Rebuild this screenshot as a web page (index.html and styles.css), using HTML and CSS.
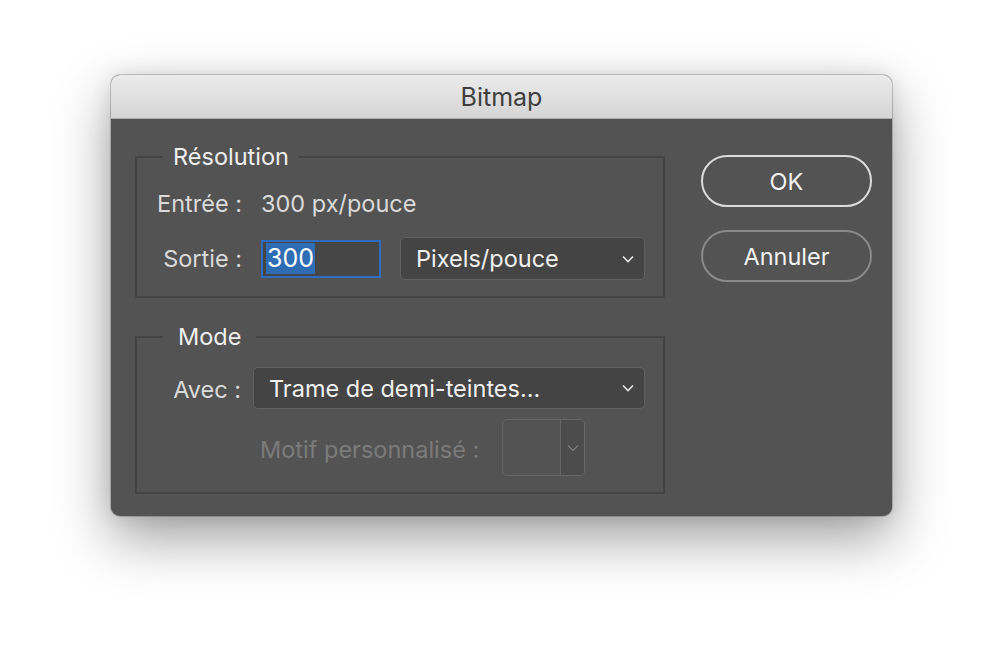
FILE: index.html
```html
<!DOCTYPE html>
<html lang="fr">
<head>
<meta charset="utf-8">
<title>Bitmap</title>
<link rel="stylesheet" href="styles.css">
</head>
<body>
<div class="desktop">
  <div class="window">
    <div class="titlebar">Bitmap</div>
    <div class="content">
      <div class="left">
        <div class="group group-res">
          <span class="group-title">Résolution</span>
          <div class="row row-in">
            <span class="label lab-res">Entrée :</span>
            <span class="value">300 px/pouce</span>
          </div>
          <div class="row row-out">
            <span class="label lab-res">Sortie :</span>
            <div class="input"><span class="sel">300</span></div>
            <div class="select select-unit">
              <span>Pixels/pouce</span>
              <svg class="chev" width="12" height="8" viewBox="0 0 12 8"><path d="M1 1.5 L6 6.5 L11 1.5" fill="none" stroke="#e6e6e6" stroke-width="1.6"/></svg>
            </div>
          </div>
        </div>
        <div class="group group-mode">
          <span class="group-title title-mode">Mode</span>
          <div class="row row-avec">
            <span class="label lab-avec">Avec :</span>
            <div class="select select-mode">
              <span>Trame de demi-teintes...</span>
              <svg class="chev" width="12" height="8" viewBox="0 0 12 8"><path d="M1 1.5 L6 6.5 L11 1.5" fill="none" stroke="#e6e6e6" stroke-width="1.6"/></svg>
            </div>
          </div>
          <div class="row row-motif">
            <span class="label-dis">Motif personnalisé :</span>
            <div class="combo">
              <div class="combo-swatch"></div>
              <div class="combo-arrow">
                <svg width="12" height="8" viewBox="0 0 12 8"><path d="M1 1.5 L6 6.5 L11 1.5" fill="none" stroke="#7a7a7a" stroke-width="1.4"/></svg>
              </div>
            </div>
          </div>
        </div>
      </div>
      <div class="right">
        <div class="btn btn-ok">OK</div>
        <div class="btn btn-cancel">Annuler</div>
      </div>
    </div>
  </div>
</div>
</body>
</html>
```
FILE: styles.css
```css
html, body {
  margin: 0;
  padding: 0;
  background: #ffffff;
}
body {
  width: 1004px;
  height: 664px;
  overflow: hidden;
  font-family: "Inter", "Liberation Sans", sans-serif;
}
.desktop {
  padding: 75px 0 0 111px;
}
.window {
  width: 781px;
  height: 441px;
  border-radius: 9px;
  overflow: hidden;
  box-shadow: 0 0 0 1px rgba(0,0,0,0.18), 0 22px 55px rgba(0,0,0,0.38), 0 0 20px rgba(0,0,0,0.10);
  display: flex;
  flex-direction: column;
  background: #535353;
}
.titlebar {
  height: 44px;
  flex: none;
  box-sizing: border-box;
  background: linear-gradient(#ebebeb, #d5d5d5);
  border-bottom: 1px solid #adadad;
  color: #3f3f3f;
  font-size: 25px;
  display: flex;
  align-items: center;
  justify-content: center;
}
.content {
  flex: 1;
  display: flex;
  padding: 37px 20px 0 24px;
  gap: 36px;
}
.left {
  width: 530px;
  display: flex;
  flex-direction: column;
  gap: 38px;
}
.group {
  position: relative;
  border: 2px solid #444444;
  box-sizing: border-box;
}
.group-title {
  position: absolute;
  top: -15px;
  left: 26px;
  padding: 0 10px;
  background: #535353;
  color: #efefef;
  font-size: 23.5px;
  line-height: 28px;
}
.title-mode {
  padding: 0 15px;
}
.group-res {
  height: 142px;
  padding: 32px 0 0 0;
}
.group-mode {
  height: 158px;
  padding: 29px 0 0 0;
}
.row {
  display: flex;
  align-items: center;
}
.label {
  color: #dadada;
  font-size: 23.5px;
  text-align: right;
  flex: none;
  white-space: nowrap;
}
.lab-res {
  width: 105px;
  margin-right: 19px;
}
.row-in {
  height: 26px;
}
.value {
  color: #dadada;
  font-size: 23.5px;
}
.row-out {
  margin-top: 21px;
  height: 43px;
}
.input {
  width: 120px;
  height: 38px;
  box-sizing: border-box;
  border: 2px solid #2d6cc0;
  background: #464646;
  display: flex;
  align-items: center;
  padding-left: 3px;
}
.sel {
  background: #2e6db4;
  color: #ffffff;
  font-size: 25px;
  line-height: 31px;
  padding: 0 1px;
}
.select {
  box-sizing: border-box;
  background: #444444;
  border: 1px solid #616161;
  border-radius: 5px;
  color: #f0f0f0;
  font-size: 23.5px;
  display: flex;
  align-items: center;
  justify-content: space-between;
}
.select-unit {
  width: 245px;
  height: 43px;
  margin-left: 19px;
  padding: 0 10px 0 15px;
}
.row-avec {
  height: 42px;
}
.lab-avec {
  width: 104px;
  margin-right: 12px;
  padding-top: 2px;
}
.select-mode {
  width: 392px;
  height: 42px;
  padding: 0 10px 0 15px;
}
.row-motif {
  margin-top: 10px;
  padding-left: 123px;
}
.label-dis {
  color: #7b7b7b;
  font-size: 23.5px;
  margin-right: 23px;
  padding-top: 3px;
  white-space: nowrap;
}
.combo {
  width: 83px;
  height: 57px;
  box-sizing: border-box;
  border: 1px solid #676767;
  border-radius: 5px;
  display: flex;
  overflow: hidden;
  flex: none;
}
.combo-swatch {
  flex: 1;
  border-right: 1px solid #676767;
}
.combo-arrow {
  width: 23px;
  background: #4c4c4c;
  display: flex;
  align-items: center;
  justify-content: center;
}
.right {
  width: 171px;
  display: flex;
  flex-direction: column;
  gap: 23px;
  margin-top: -1px;
}
.btn {
  height: 52px;
  box-sizing: border-box;
  border-radius: 26px;
  display: flex;
  align-items: center;
  justify-content: center;
  color: #f2f2f2;
  font-size: 23.5px;
}
.btn-ok {
  border: 2px solid #dcdcdc;
}
.btn-cancel {
  border: 2px solid #8a8a8a;
}
```
